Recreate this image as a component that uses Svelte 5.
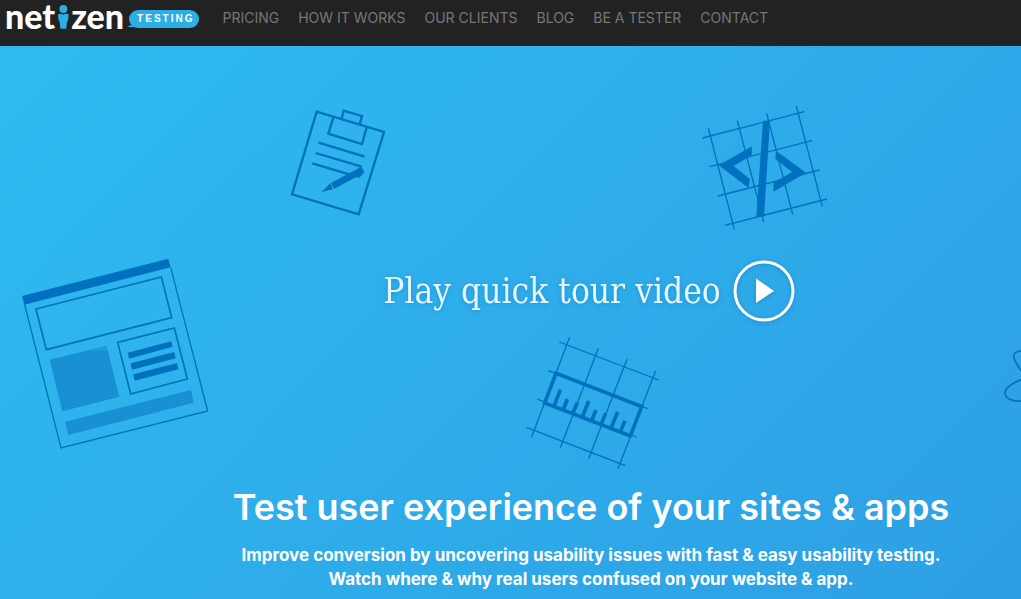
<script>
  const links = ['Pricing', 'How it works', 'Our clients', 'Blog', 'Be a tester', 'Contact'];
</script>

<div class="page">
  <header>
    <a class="logo" href="#home" aria-label="netizen testing">
      <span class="word">net<svg class="person" viewBox="0 0 36 76" aria-hidden="true"><circle cx="16" cy="12" r="12" /><path d="M0 28Q8 24 16 30Q24 24 32 28L31 44L27 52L25 72H7L5 52L1 44Z" /></svg>zen</span>
      <span class="pill">TESTING</span>
    </a>
    <nav>
      {#each links as link}
        <a href="#{link.toLowerCase().replaceAll(' ', '-')}">{link}</a>
      {/each}
    </nav>
  </header>

  <main>
    <svg class="art" viewBox="0 46 1021 553" preserveAspectRatio="xMidYMid slice" aria-hidden="true">
      <g transform="translate(280 95) scale(.33333)" stroke-width="7">
        <path d="M110 50L312 111L236 358L36 298Z" />
        <path d="M185 70L191 47L246 63L239 88M160 68L145 116L246 147L260 98M116 143L254 185M107 174L245 215M97 205L228 244" />
        <path class="solid" d="M124 291L151 265L159 283ZM153 264L237 219L240 210L254 232L236 250L230 245L162 282Z" />
      </g>

      <g transform="translate(690 95) scale(.33333)" stroke-width="4">
        <path d="M55 99L133 403M142 77L221 381M230 55L308 358M319 33L397 335M37 129L343 50M60 215L366 137M83 303L389 225M105 391L411 312" />
        <path class="solid" d="M219 77H240L222 365H199ZM186 154L185 181L131 213L179 252L176 279L86 211ZM258 167L348 233L250 290L251 263L306 231L256 192Z" />
      </g>

      <g transform="translate(10 250) scale(.33333)" stroke-width="4">
        <path d="M43 160L153 594L593 483L482 52" />
        <path class="solid" d="M36 138L475 26L482 52L43 164Z" />
        <path stroke-width="5" d="M78 177L454 81L485 203L109 299ZM323 277L493 234L532 387L362 432Z" />
        <path class="soft" d="M119 329L290 287L328 440L157 484ZM165 515L543 420L551 458L175 555Z" />
        <path class="glare" d="M235 302L290 288L293 302Z" />
        <path class="solid" d="M353 308L484 274L488 290L357 326ZM362 340L493 306L497 325L366 359ZM370 373L501 339L505 358L374 392Z" />
      </g>

      <g transform="translate(515 330) scale(.33333)" stroke-width="4">
        <path d="M164 22L50 320M250 55L136 353M336 88L221 386M422 122L309 416M133 36L431 150M100 122L398 236M66 207L365 321M34 292L331 407" />
        <path stroke-width="11" d="M123 130L380 230L346 318L89 219Z" />
        <path stroke-width="11" d="M136 179L118 226M157 207L146 237M187 217L174 249M221 213L203 259M243 240L231 270M272 250L259 282M308 246L288 294M330 272L317 303" />
      </g>

      <g transform="translate(980 330) scale(.33333)" stroke-width="5">
        <path d="M135 64C95 60 95 78 112 105L137 143M135 147C100 154 74 174 75 191C76 210 110 217 135 211" />
      </g>
    </svg>

    <div class="content">
      <button class="play" type="button">
        <span>Play quick tour video</span>
        <svg viewBox="0 0 62 62" aria-hidden="true"><circle cx="31" cy="31" r="29" /><path d="M23 18.500L41 31L23 43Z" /></svg>
      </button>
      <h1>Test user experience of your sites &amp; apps</h1>
      <p>Improve conversion by uncovering usability issues with fast &amp; easy usability testing.<br />Watch where &amp; why real users confused on your website &amp; app.</p>
    </div>
  </main>
</div>

<style>
  :global(body) {
    margin: 0;
    overflow-x: hidden;
  }
  .page {
    display: flex;
    flex-direction: column;
    min-height: 100vh;
    font-family: Inter, "Liberation Sans", sans-serif;
  }
  header {
    display: flex;
    align-items: flex-start;
    gap: 23px;
    height: 46px;
    padding-left: 5px;
    box-sizing: border-box;
    background: #222;
  }
  .logo {
    display: flex;
    text-decoration: none;
  }
  .word {
    display: flex;
    align-items: flex-start;
    font: 900 34px/32px Lato, sans-serif;
    color: #fff;
  }
  .person {
    width: 12px;
    height: 25px;
    margin: 5px 1px 0 3px;
    fill: #2bade5;
  }
  .pill {
    position: relative;
    align-self: flex-start;
    margin: 10px 0 0 5px;
    padding: 0 5px 0 8px;
    border-radius: 9px;
    background: #2bade5;
    color: #fff;
    font: 700 10px/18px "Liberation Sans", sans-serif;
    letter-spacing: 2px;
  }
  .pill::before {
    content: "";
    position: absolute;
    left: -2px;
    bottom: 1px;
    border: solid transparent;
    border-width: 6px 0 0 8px;
    border-bottom: 4px solid #2bade5;
  }
  nav {
    display: flex;
    gap: 19px;
    padding-top: 8px;
  }
  nav a {
    color: #777;
    font-size: 14px;
    line-height: 20px;
    text-decoration: none;
    text-transform: uppercase;
    white-space: nowrap;
  }
  main {
    position: relative;
    flex: 1;
    overflow: hidden;
    background: linear-gradient(135deg, #2fbbf0, #2d9fe4);
  }
  .art {
    position: absolute;
    inset: 0;
    width: 100%;
    height: 100%;
    fill: none;
    stroke: #0071bf;
  }
  .solid {
    fill: #0071bf;
    stroke: none;
  }
  .soft {
    fill: #1890d3;
    stroke: none;
  }
  .glare {
    fill: #219bdb;
    stroke: none;
  }
  .content {
    position: relative;
    display: flex;
    flex-direction: column;
    align-items: center;
    padding: 213px 0 8px 161px;
    color: #fff;
    text-align: center;
  }
  .play {
    display: flex;
    align-items: center;
    gap: 12px;
    padding: 0 4px 0 0;
    border: 0;
    background: none;
    color: #ffffffe6;
    font: 300 35px/64px "DejaVu Serif Condensed", "DejaVu Serif", serif;
    white-space: nowrap;
    filter: drop-shadow(0 1px 2px #0071bf80);
    cursor: pointer;
  }
  .play svg {
    width: 62px;
    height: 62px;
  }
  .play circle {
    fill: none;
    stroke: #fff;
    stroke-width: 3;
  }
  .play path {
    fill: #fff;
  }
  h1 {
    margin: 160px 0 0;
    font-size: 36px;
    font-weight: 600;
    line-height: 48px;
    white-space: nowrap;
  }
  p {
    margin: 12px 0 0;
    font-size: 17px;
    font-weight: 700;
    line-height: 24px;
    white-space: nowrap;
  }
</style>
